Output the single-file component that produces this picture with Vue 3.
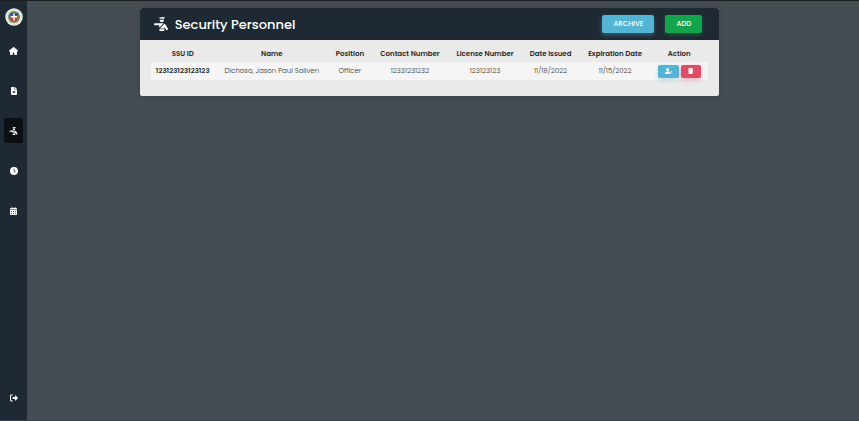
<script setup>
const home = 'M575.8 255.5c0 18-15 32.100-32 32.100h-32l.7 160.200c0 35-29 64-64 64H376c-22 0-40-18-40-40v-88c0-18-14-32-32-32h-32c-18 0-32 14-32 32v88c0 22-18 40-40 40h-72c-35 0-64-29-64-64V287.600H32c-18 0-32-14-32-32.100 0-9 3-17 10-24L266.400 8c7-7 15-8 22-8s15 2 21 7l255 224.500c8 7 12 15 11.400 24z'
const file = 'M64 0C28.700 0 0 28.700 0 64v384c0 35.300 28.700 64 64 64h256c35.300 0 64-28.700 64-64V160H256c-17.700 0-32-14.300-32-32V0H64zm192 0v128h128L256 0zM112 256h160v44H112v-44zm0 84h160v44H112v-44z'
const officer = 'M246.9 14.1C234 15.2 224 26 224 39c0 13.8 11.200 25 25 25H400c8.800 0 16-7.200 16-16V17.400C416 8 408 .7 398.700 1.400L246.900 14.100zM240 112c0 44.200 35.800 80 80 80s80-35.800 80-80c0-5.500-.6-10.800-1.600-16H241.600c-1 5.200-1.600 10.500-1.600 16zM72 224c-22.100 0-40 17.900-40 40s17.900 40 40 40H224v89.400L386.800 230.500c-13.300-4.300-27.300-6.500-41.600-6.500H72zm345.700 20.900L246.600 416H416v-46.300l53.600 90.600c11.200 19 35.800 25.300 54.800 14.100s25.300-35.800 14.100-54.800L462.300 290.800c-11.200-18.900-26.600-34.500-44.600-45.900zM224 448v32c0 17.700 14.300 32 32 32h128c17.700 0 32-14.300 32-32v-32H224z'
const clock = 'M256 0a256 256 0 1 1 0 512A256 256 0 1 1 256 0zm-24 120v136c0 8 4 15.500 10.700 20l96 64c11 7.400 25.900 4.400 33.300-6.700s4.400-25.900-6.700-33.300L280 243.200V120c0-13.300-10.700-24-24-24s-24 10.700-24 24z'
const calendar = 'M128 0c17.700 0 32 14.300 32 32v32h128V32c0-17.700 14.300-32 32-32s32 14.300 32 32v32h48c26.500 0 48 21.500 48 48v48H0v-48c0-26.500 21.500-48 48-48h48V32c0-17.700 14.300-32 32-32zM0 192h448v272c0 26.500-21.500 48-48 48H48c-26.500 0-48-21.500-48-48V192zm64 64v48h64v-48H64zm128 0v48h64v-48h-64zm128 0v48h64v-48h-64zM64 384v48h64v-48H64zm128 0v48h64v-48h-64zm128 0v48h64v-48h-64z'

const links = [
  { label: 'Home', path: home, box: '0 0 576 512' },
  { label: 'Reports', path: file, box: '0 0 384 512' },
  { label: 'Security Personnel', path: officer, box: '0 0 576 512', active: true },
  { label: 'Attendance', path: clock, box: '0 0 512 512' },
  { label: 'Schedule', path: calendar, box: '0 0 448 512' }
]

const columns = [
  { label: 'SSU ID', name: 'id' },
  { label: 'Name', name: 'name' },
  { label: 'Position', name: 'position' },
  { label: 'Contact Number', name: 'contact' },
  { label: 'License Number', name: 'license' },
  { label: 'Date Issued', name: 'issued' },
  { label: 'Expiration Date', name: 'expires' },
  { label: 'Action', name: 'action' }
]

const people = [
  {
    id: '123123123123123',
    name: 'Dichoso, Jason Paul Soliven',
    position: 'Officer',
    contact: '12331231232',
    license: '123123123',
    issued: '11/18/2022',
    expires: '11/15/2022'
  }
]
</script>

<template>
  <div class="page">
    <aside class="sidebar">
      <a href="#" class="brand" aria-label="Dashboard">
        <svg viewBox="0 0 36 36" aria-hidden="true">
          <circle cx="18" cy="18" r="17.500" fill="#f1f0ec" />
          <circle cx="18" cy="18" r="14.500" fill="none" stroke="#c4c1b8" stroke-width="2" stroke-dasharray="2 1.500" />
          <circle cx="18" cy="18" r="12" fill="#6f8f4e" />
          <path d="M10 10h16v9H10z" fill="#3553c0" />
          <path d="M10 19h16c0 4-4 7-8 9-4-2-8-5-8-9z" fill="#d0383f" />
          <path d="M16.500 11h3v5h5v3h-5v6h-3v-6h-5v-3h5z" fill="#fff" />
        </svg>
      </a>
      <nav class="nav">
        <a
          v-for="link in links"
          :key="link.label"
          href="#"
          class="nav-link"
          :class="{ active: link.active }"
          :aria-label="link.label"
        >
          <svg :viewBox="link.box" aria-hidden="true"><path :d="link.path" fill-rule="evenodd" /></svg>
        </a>
      </nav>
      <a href="#" class="nav-link logout" aria-label="Log out">
        <svg viewBox="0 0 512 512" aria-hidden="true">
          <path d="M160 96c17.700 0 32-14.300 32-32s-14.300-32-32-32H96C43 32 0 75 0 128v256c0 53 43 96 96 96h64c17.700 0 32-14.300 32-32s-14.300-32-32-32H96c-17.700 0-32-14.300-32-32V128c0-17.700 14.300-32 32-32h64zM504.500 273.400c9.700-9.200 9.700-25.600 0-34.800l-144-136c-7-6.600-17.200-8.400-26-4.600s-14.500 12.500-14.500 22v72H192c-17.700 0-32 14.300-32 32v64c0 17.700 14.300 32 32 32h128v72c0 9.600 5.700 18.200 14.500 22s19 2 26-4.600l144-136z" />
        </svg>
      </a>
    </aside>

    <main class="content">
      <section class="card">
        <header class="card-header">
          <svg class="title-icon" viewBox="0 0 576 512" aria-hidden="true"><path :d="officer" /></svg>
          <h1>Security Personnel</h1>
          <div class="tools">
            <button type="button" class="btn info">ARCHIVE</button>
            <button type="button" class="btn success">ADD</button>
          </div>
        </header>
        <div class="card-body">
          <table>
            <colgroup>
              <col v-for="column in columns" :key="column.name" :class="'col-' + column.name" />
            </colgroup>
            <thead>
              <tr>
                <th v-for="column in columns" :key="column.name" scope="col">{{ column.label }}</th>
              </tr>
            </thead>
            <tbody>
              <tr v-for="person in people" :key="person.id">
                <th scope="row">{{ person.id }}</th>
                <td>{{ person.name }}</td>
                <td>{{ person.position }}</td>
                <td>{{ person.contact }}</td>
                <td>{{ person.license }}</td>
                <td>{{ person.issued }}</td>
                <td>{{ person.expires }}</td>
                <td>
                  <div class="actions">
                    <button type="button" class="btn icon-btn info" aria-label="Edit">
                      <svg viewBox="0 0 640 512" aria-hidden="true">
                        <path d="M224 256a128 128 0 1 0 0-256 128 128 0 1 0 0 256zm-46 48C80 304 0 384 0 482c0 17 13 30 30 30h293c-4-9-4-20-1-31l15-60c3-12 9-22 17-31l62-62c-30-16-60-24-96-24H178zM550 236l-30 30 71 71 29-30c16-15 16-41 0-56l-14-15c-16-15-41-15-56 0zM497 289 368 418c-4 4-7 9-8 15l-15 60c-2 6 0 11 4 15s10 6 15 4l60-15c6-1 11-4 15-8l129-129-71-71z" />
                      </svg>
                    </button>
                    <button type="button" class="btn icon-btn danger" aria-label="Delete">
                      <svg viewBox="0 0 448 512" aria-hidden="true">
                        <path d="M135 18 128 32H32C14 32 0 46 0 64s14 32 32 32h384c18 0 32-14 32-32s-14-32-32-32h-96l-7-14C307 7 296 0 284 0H164c-12 0-23 7-29 18zM416 128H32l21 339c2 25 23 45 48 45h246c25 0 46-20 48-45l21-339z" />
                      </svg>
                    </button>
                  </div>
                </td>
              </tr>
            </tbody>
          </table>
        </div>
      </section>
    </main>
  </div>
</template>

<style>
body {
  background: #454c53;
}
</style>

<style scoped>
.page {
  box-sizing: border-box;
  display: grid;
  grid-template-columns: 27px 1fr;
  min-height: 100vh;
  border-top: 1px solid #1b1e21;
  border-bottom: 1px solid #2d4552;
  background: #454c53;
  font-family: Poppins, Inter, "Liberation Sans", sans-serif;
  font-size: 7px;
  color: #4f4f4f;
}

.sidebar {
  display: flex;
  flex-direction: column;
  align-items: center;
  padding: 7px 0 10px;
  background: #1f2933;
}

.brand {
  display: flex;
}

.brand svg {
  width: 18px;
  height: 18px;
}

.nav {
  display: flex;
  flex-direction: column;
  gap: 15px;
  margin-top: 12px;
}

.nav-link {
  display: flex;
  align-items: center;
  justify-content: center;
  width: 19px;
  height: 25px;
  border-radius: 2px;
}

.nav-link svg {
  height: 8px;
  fill: #fff;
}

.nav-link.active {
  background: #0c1014;
}

.logout {
  margin-top: auto;
}

.content {
  padding: 7px 27px 0 0;
}

.card {
  width: 72%;
  margin: 0 auto;
  border-radius: 2px;
  overflow: hidden;
  background: #eaeaea;
  box-shadow: 0 1px 6px rgba(0, 0, 0, 0.15);
}

.card-header {
  display: flex;
  align-items: center;
  height: 32px;
  padding: 0 17px 0 13px;
  background: #1f2933;
  color: #fff;
}

.title-icon {
  width: 16px;
  height: 14px;
  fill: #fff;
}

h1 {
  margin: 2px 0 0 6px;
  font-size: 13px;
  line-height: 20px;
  font-weight: 500;
}

.tools {
  display: flex;
  gap: 11px;
  margin-left: auto;
}

.btn {
  display: flex;
  align-items: center;
  justify-content: center;
  height: 18px;
  padding: 0 11px;
  border: 0;
  border-radius: 2px;
  font: inherit;
  font-weight: 500;
  color: #fff;
}

.info {
  background: #54b4d3;
  box-shadow: 0 2px 4px rgba(84, 180, 211, 0.4);
}

.success {
  background: #14a44d;
  box-shadow: 0 2px 4px rgba(20, 164, 77, 0.4);
}

.danger {
  background: #dc4c64;
  box-shadow: 0 2px 4px rgba(220, 76, 100, 0.4);
}

.card-body {
  padding: 5px 11px 16px;
}

table {
  width: 100%;
  table-layout: fixed;
  border-collapse: collapse;
  text-align: center;
}

.col-id { width: 64px; }
.col-name { width: 114px; }
.col-position { width: 42px; }
.col-contact { width: 78px; }
.col-license { width: 72px; }
.col-issued { width: 59px; }
.col-expires { width: 70px; }
.col-action { width: 58px; }

th,
td {
  height: 18px;
  padding: 0;
  white-space: nowrap;
}

thead th {
  height: 17px;
}

td {
  font-weight: 300;
  color: #333;
}

th {
  font-weight: 600;
  color: #262626;
}

tbody tr {
  background: #f5f5f5;
}

.actions {
  display: flex;
  justify-content: center;
  gap: 2px;
}

.icon-btn {
  height: 13px;
  padding: 0 7px;
}

.icon-btn svg {
  height: 6px;
  fill: #fff;
}
</style>
